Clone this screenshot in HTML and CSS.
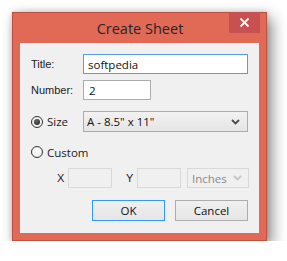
FILE: index.html
```html
<!DOCTYPE html>
<html>
<head>
<meta charset="utf-8">
<link rel="stylesheet" href="styles.css">
</head>
<body>
<div class="window">
  <div class="titlebar">
    <span class="title">Create Sheet</span>
    <div class="close"><svg width="11" height="11" viewBox="0 0 11 11"><path d="M1.5 1.5 L9.5 9.5 M9.5 1.5 L1.5 9.5" stroke="#fff" stroke-width="1.8" fill="none"/></svg></div>
  </div>
  <div class="client">
    <div class="row row-title">
      <span class="lbl">Title:</span>
      <div class="input focus">softpedia</div>
    </div>
    <div class="row row-number">
      <span class="lbl">Number:</span>
      <div class="input num">2</div>
    </div>
    <div class="row row-size">
      <span class="radio checked"></span>
      <span class="rlbl">Size</span>
      <div class="select size">
        <span>A - 8.5" x 11"</span>
        <svg width="9" height="6" viewBox="0 0 9 6"><path d="M1 1 L4.5 4.5 L8 1" stroke="#4a4a4a" stroke-width="1.8" fill="none"/></svg>
      </div>
    </div>
    <div class="row row-custom">
      <span class="radio"></span>
      <span class="rlbl">Custom</span>
    </div>
    <div class="row row-xy">
      <span class="xl">X</span>
      <div class="input dis xin"></div>
      <span class="yl">Y</span>
      <div class="input dis yin"></div>
      <div class="select dis units">
        <span>Inches</span>
        <svg width="9" height="6" viewBox="0 0 9 6"><path d="M1 1 L4.5 4.5 L8 1" stroke="#c4c4c4" stroke-width="1.8" fill="none"/></svg>
      </div>
    </div>
    <div class="buttons">
      <div class="btn ok">OK</div>
      <div class="btn">Cancel</div>
    </div>
  </div>
</div>
</body>
</html>
```
FILE: styles.css
```css
* { box-sizing: border-box; }
html, body { margin: 0; padding: 0; background: #fff; }
body { padding: 12px 0 0 12px; font-family: "Liberation Sans", Arial, sans-serif; font-size: 11px; color: #1b1b1b; }

.window {
  width: 255px;
  height: 229px;
  background: #e06a55;
  border: 1px solid #c0503e;
  padding: 0 7px 7px;
  box-shadow: 5px 6px 14px rgba(0,0,0,0.45), 0 0 6px rgba(0,0,0,0.18);
  display: flex;
  flex-direction: column;
}

.titlebar {
  height: 30px;
  position: relative;
  display: flex;
  align-items: center;
  justify-content: center;
}
.title {
  font-family: "Open Sans", "Noto Sans", sans-serif;
  font-size: 14.5px;
  color: #262626;
  margin-left: 1px;
}
.close {
  position: absolute;
  top: -1px;
  right: -1px;
  width: 31px;
  height: 21px;
  background: #c75050;
  display: flex;
  align-items: center;
  justify-content: center;
}

.client {
  flex: 1;
  background: #f0f0f0;
  display: flex;
  flex-direction: column;
  padding-left: 11px;
}

.row { display: flex; align-items: center; }
.lbl { width: 52px; }
.row-title { margin-top: 11px; height: 20px; }
.row-number { margin-top: 6px; height: 20px; }
.row-size { margin-top: 11px; height: 21px; }
.row-custom { margin-top: 10px; height: 20px; }
.row-xy { margin-top: 6px; height: 20px; padding-left: 26px; }

.input {
  height: 20px;
  background: #fff;
  border: 1px solid #acacac;
  padding-left: 4px;
  display: flex;
  align-items: center;
  font-family: "Open Sans", "Noto Sans", sans-serif;
  font-size: 11.5px;
  color: #111;
}
.input.focus { width: 165px; border-color: #569de5; }
.input.num { width: 68px; padding-left: 5px; }
.input.dis { background: #f0f0f0; border-color: #d9d9d9; }
.xin { width: 44px; }
.yin { width: 44px; }
.xl { width: 11px; }
.yl { width: 11px; margin-left: 14px; }

.radio {
  width: 12px;
  height: 12px;
  border-radius: 50%;
  border: 1px solid #333;
  background: radial-gradient(circle at 50% 40%, #fdfdfd, #e6e6e6);
  position: relative;
  flex: none;
}
.radio.checked::after {
  content: "";
  position: absolute;
  left: 2px; top: 2px;
  width: 6px; height: 6px;
  border-radius: 50%;
  background: radial-gradient(circle at 40% 35%, #666, #1e1e1e);
}
.rlbl { margin-left: 4px; font-family: "Open Sans", "Noto Sans", sans-serif; font-size: 11.5px; }
.row-size .rlbl { width: 36px; }

.select {
  height: 21px;
  border: 1px solid #acacac;
  background: linear-gradient(#f2f2f2, #e5e5e5);
  display: flex;
  align-items: center;
  justify-content: space-between;
  padding: 0 7px 0 3px;
  font-family: "Open Sans", "Noto Sans", sans-serif;
  font-size: 11.5px;
  color: #111;
}
.select.size { width: 165px; }
.select.dis {
  width: 62px;
  height: 20px;
  margin-left: 6px;
  background: #f0f0f0;
  border-color: #d9d9d9;
  color: #8a8a8a;
  padding-left: 4px;
  padding-right: 6px;
}

.buttons {
  margin-top: 12px;
  display: flex;
  gap: 10px;
  padding-left: 61px;
}
.btn {
  width: 73px;
  height: 21px;
  border: 1px solid #acacac;
  background: linear-gradient(#f0f0f0, #e5e5e5);
  display: flex;
  align-items: center;
  justify-content: center;
  font-family: "Open Sans", "Noto Sans", sans-serif;
  font-size: 11.5px;
  color: #111;
}
.btn.ok { border-color: #3399ff; }
```
